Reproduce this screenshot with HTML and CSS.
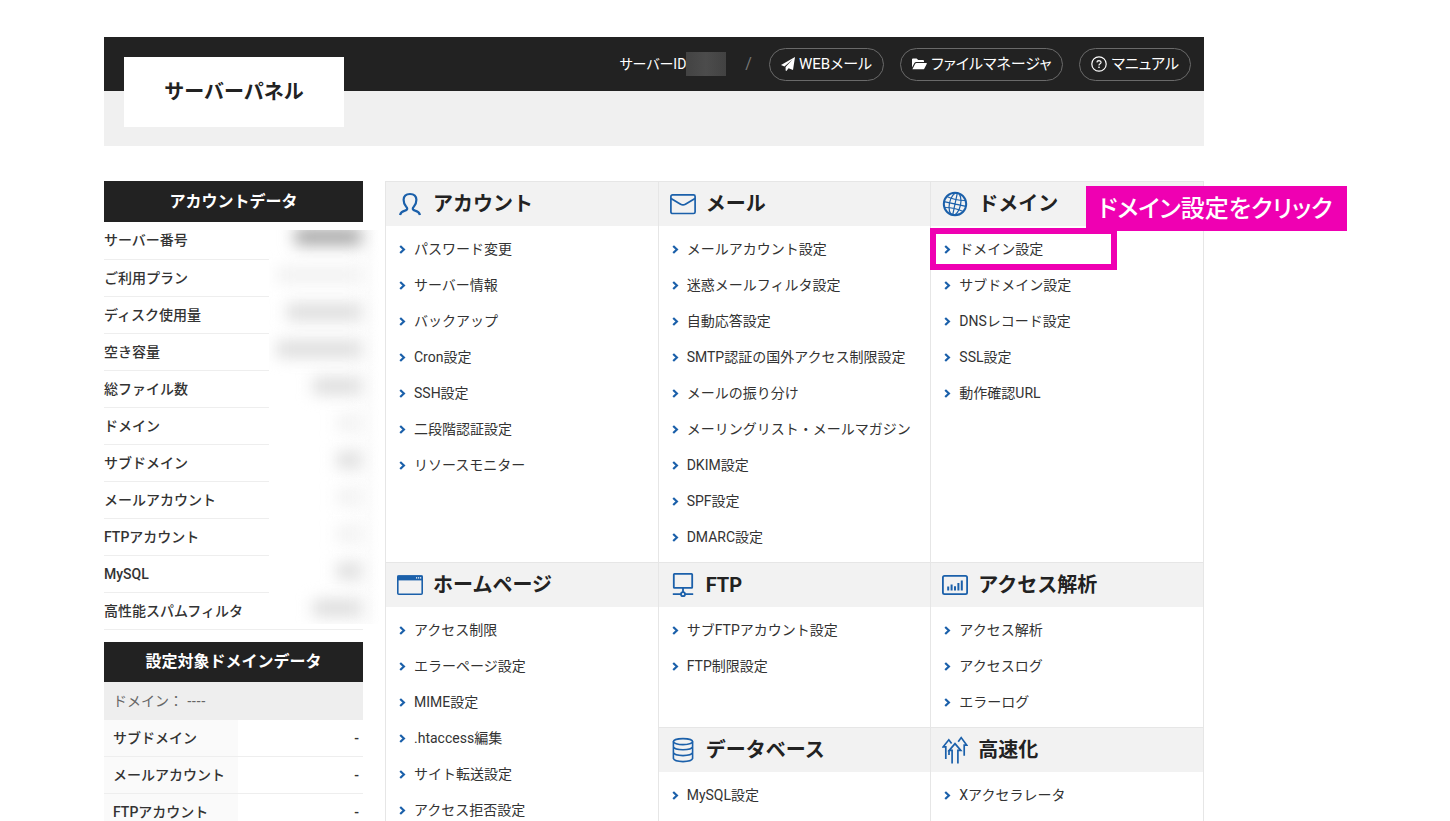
FILE: index.html
```html
<!DOCTYPE html>
<html lang="ja">
<head>
<meta charset="utf-8">
<title>サーバーパネル</title>
<link rel="stylesheet" href="styles.css">
</head>
<body>
<svg class="defs" aria-hidden="true">
  <symbol id="chev" viewBox="0 0 7 9"><path d="M1.2 1 L4.9 4.5 L1.2 8" fill="none" stroke="#1b60aa" stroke-width="2.2"/></symbol>
</svg>
<div class="page">
  <header class="header">
    <div class="topbar">
      <span class="server-id">サーバーID<span class="id-mask"></span></span>
      <span class="slash">/</span>
      <a class="pill" href="#"><svg width="14" height="14" viewBox="0 0 14 14"><path d="M14 0 L12 13 L7.6 11.2 L5.4 14 L4.6 13.6 V10 L11.6 2.6 L3.4 9.4 L0 8Z" fill="#fff"/></svg>WEBメール</a>
      <a class="pill" href="#"><svg width="15" height="12" viewBox="0 0 15 12"><path d="M0 9.6 V1.4 Q0 .4 1 .4 H4.6 L6.2 2 H11 Q12 2 12 3 V4 H4.2 Q3 4 2.4 5Z M.4 11.2 L3.2 5.8 Q3.6 5 4.4 5 H14.4 Q15 5.1 14.8 5.8 L12.4 10.4 Q11.9 11.3 11 11.3Z" fill="#fff"/></svg>ファイルマネージャ</a>
      <a class="pill" href="#"><svg width="16" height="16" viewBox="0 0 16 16"><g fill="none" stroke="#fff" stroke-width="1.2"><circle cx="8" cy="8" r="7.2"/><path d="M5.9 6.4 Q6 4.6 8 4.6 Q10.1 4.7 10.1 6.3 Q10 7.4 8.8 8 Q8 8.4 8 9.4"/></g><rect x="7.3" y="10.6" width="1.4" height="1.4" fill="#fff"/></svg>マニュアル</a>
    </div>
    <h1 class="logo">サーバーパネル</h1>
  </header>

  <div class="columns">
    <aside class="side">
      <section class="account">
        <h2 class="side-title">アカウントデータ</h2>
        <table class="data">
          <tr><th>サーバー番号</th></tr>
          <tr><th>ご利用プラン</th></tr>
          <tr><th>ディスク使用量</th></tr>
          <tr><th>空き容量</th></tr>
          <tr><th>総ファイル数</th></tr>
          <tr><th>ドメイン</th></tr>
          <tr><th>サブドメイン</th></tr>
          <tr><th>メールアカウント</th></tr>
          <tr><th>FTPアカウント</th></tr>
          <tr><th>MySQL</th></tr>
          <tr><th>高性能スパムフィルタ</th></tr>
        </table>
        <div class="veil" aria-hidden="true">
          <i class="w-head"></i><i class="w-xl faint"></i><i class="w-l"></i><i class="w-xl"></i><i class="w-m"></i><i class="w-s faint"></i><i class="w-s"></i><i class="w-s faint"></i><i class="w-s faint"></i><i class="w-s"></i><i class="w-m"></i>
        </div>
      </section>
      <section>
        <h2 class="side-title">設定対象ドメインデータ</h2>
        <p class="domain">ドメイン： ----</p>
        <table class="data target">
          <tr><th>サブドメイン</th><td>-</td></tr>
          <tr><th>メールアカウント</th><td>-</td></tr>
          <tr><th>FTPアカウント</th><td>-</td></tr>
        </table>
      </section>
    </aside>

    <main class="menu">
      <section class="card">
        <h2><svg width="26" height="26" viewBox="0 0 26 26"><path d="M3 24 Q4 20.4 8 19.6 Q10.2 19.2 10.2 17.6 Q10.2 16.8 9.2 15.8 Q6.6 13 6.6 8.8 Q6.8 3 13 3 Q19.2 3 19.4 8.8 Q19.4 13 16.8 15.8 Q15.8 16.8 15.8 17.6 Q15.8 19.2 18 19.6 Q22 20.4 23 24" fill="none" stroke="#1b60aa" stroke-width="2.2"/></svg>アカウント</h2>
        <ul>
          <li><svg><use href="#chev"/></svg><a href="#">パスワード変更</a></li>
          <li><svg><use href="#chev"/></svg><a href="#">サーバー情報</a></li>
          <li><svg><use href="#chev"/></svg><a href="#">バックアップ</a></li>
          <li><svg><use href="#chev"/></svg><a href="#">Cron設定</a></li>
          <li><svg><use href="#chev"/></svg><a href="#">SSH設定</a></li>
          <li><svg><use href="#chev"/></svg><a href="#">二段階認証設定</a></li>
          <li><svg><use href="#chev"/></svg><a href="#">リソースモニター</a></li>
        </ul>
      </section>
      <section class="card">
        <h2><svg width="26" height="26" viewBox="0 0 26 26"><g fill="none" stroke="#1b60aa" stroke-width="1.7"><rect x=".9" y="3.9" width="24.2" height="18.6" rx="1.6"/><path d="M1 7.4 L10.6 13.2 Q13 14.6 15.4 13.2 L25 7.4"/></g></svg>メール</h2>
        <ul>
          <li><svg><use href="#chev"/></svg><a href="#">メールアカウント設定</a></li>
          <li><svg><use href="#chev"/></svg><a href="#">迷惑メールフィルタ設定</a></li>
          <li><svg><use href="#chev"/></svg><a href="#">自動応答設定</a></li>
          <li><svg><use href="#chev"/></svg><a href="#">SMTP認証の国外アクセス制限設定</a></li>
          <li><svg><use href="#chev"/></svg><a href="#">メールの振り分け</a></li>
          <li><svg><use href="#chev"/></svg><a href="#">メーリングリスト・メールマガジン</a></li>
          <li><svg><use href="#chev"/></svg><a href="#">DKIM設定</a></li>
          <li><svg><use href="#chev"/></svg><a href="#">SPF設定</a></li>
          <li><svg><use href="#chev"/></svg><a href="#">DMARC設定</a></li>
        </ul>
      </section>
      <section class="card">
        <h2><svg width="26" height="26" viewBox="0 0 26 26"><g fill="none" stroke="#1b60aa" stroke-width="1.2"><circle cx="13" cy="13" r="11.2" stroke-width="2"/><g transform="rotate(12 13 13)"><ellipse cx="13" cy="13" rx="5.6" ry="11.3"/><path d="M13 1.7 V24.3 M1.7 13 H24.3 M3.4 7.4 Q13 9.6 22.6 7.4 M3.4 18.6 Q13 16.4 22.6 18.6"/></g></g></svg>ドメイン</h2>
        <ul>
          <li class="marked"><svg><use href="#chev"/></svg><a href="#">ドメイン設定</a></li>
          <li><svg><use href="#chev"/></svg><a href="#">サブドメイン設定</a></li>
          <li><svg><use href="#chev"/></svg><a href="#">DNSレコード設定</a></li>
          <li><svg><use href="#chev"/></svg><a href="#">SSL設定</a></li>
          <li><svg><use href="#chev"/></svg><a href="#">動作確認URL</a></li>
        </ul>
        <p class="callout">ドメイン設定をクリック</p>
      </section>
      <section class="card tall">
        <h2><svg width="26" height="26" viewBox="0 0 26 26"><rect x=".8" y="4" width="24.4" height="18.2" rx="1" fill="none" stroke="#1b60aa" stroke-width="1.6"/><path d="M.4 3.4 H25.6 V8.4 H.4Z" fill="#1b60aa"/><path d="M19 5.8 H20.2 M21 5.8 H22.2 M23 5.8 H24.2" stroke="#fff" stroke-width="1.2"/></svg>ホームページ</h2>
        <ul>
          <li><svg><use href="#chev"/></svg><a href="#">アクセス制限</a></li>
          <li><svg><use href="#chev"/></svg><a href="#">エラーページ設定</a></li>
          <li><svg><use href="#chev"/></svg><a href="#">MIME設定</a></li>
          <li><svg><use href="#chev"/></svg><a href="#">.htaccess編集</a></li>
          <li><svg><use href="#chev"/></svg><a href="#">サイト転送設定</a></li>
          <li><svg><use href="#chev"/></svg><a href="#">アクセス拒否設定</a></li>
        </ul>
      </section>
      <section class="card">
        <h2><svg width="26" height="26" viewBox="0 0 26 26"><g fill="none" stroke="#1b60aa" stroke-width="1.8"><rect x="3.8" y="1.9" width="18.4" height="14" rx=".6"/><path d="M13 16 V20 M2.8 22.2 H11 M15 22.2 H23.2"/><circle cx="13" cy="22.2" r="2"/></g></svg>FTP</h2>
        <ul>
          <li><svg><use href="#chev"/></svg><a href="#">サブFTPアカウント設定</a></li>
          <li><svg><use href="#chev"/></svg><a href="#">FTP制限設定</a></li>
        </ul>
      </section>
      <section class="card">
        <h2><svg width="26" height="26" viewBox="0 0 26 26"><rect x=".9" y="3.9" width="24.2" height="18.2" rx="1.6" fill="none" stroke="#1b60aa" stroke-width="1.8"/><path d="M6.2 18.6 V14.6 M9.6 18.6 V12.6 M13 18.6 V14.2 M16.4 18.6 V11 M19.8 18.6 V8.4" stroke="#1b60aa" stroke-width="2"/></svg>アクセス解析</h2>
        <ul>
          <li><svg><use href="#chev"/></svg><a href="#">アクセス解析</a></li>
          <li><svg><use href="#chev"/></svg><a href="#">アクセスログ</a></li>
          <li><svg><use href="#chev"/></svg><a href="#">エラーログ</a></li>
        </ul>
      </section>
      <section class="card">
        <h2><svg width="26" height="26" viewBox="0 0 26 26"><g fill="none" stroke="#1b60aa" stroke-width="1.6"><ellipse cx="13" cy="4.6" rx="9.6" ry="3"/><path d="M3.4 4.6 V21.6 Q4.4 24.6 13 24.6 Q21.6 24.6 22.6 21.6 V4.6 M3.4 9.8 Q4.4 12.8 13 12.8 Q21.6 12.8 22.6 9.8 M3.4 15.6 Q4.4 18.6 13 18.6 Q21.6 18.6 22.6 15.6"/></g></svg>データベース</h2>
        <ul>
          <li><svg><use href="#chev"/></svg><a href="#">MySQL設定</a></li>
        </ul>
      </section>
      <section class="card">
        <h2><svg width="26" height="28" viewBox="0 0 26 28"><g fill="none" stroke="#1b60aa" stroke-width="1.7"><path d="M10.1 27.4 V14.4 H7.2 L13 7.6 L18.8 14.4 H15.9 V27.4"/><path d="M3.8 23 V10.8 H1.2 L6.8 3.8 L9.6 7.6 M16.2 5.8 L19.2 1.6 L24.8 9.2 H22.2 V19.8 M7 19 V14.4"/></g></svg>高速化</h2>
        <ul>
          <li><svg><use href="#chev"/></svg><a href="#">Xアクセラレータ</a></li>
        </ul>
      </section>
    </main>
  </div>
</div>
</body>
</html>
```
FILE: styles.css
```css
* { box-sizing: border-box; }
body {
  margin: 0;
  height: 100vh;
  overflow: hidden;
  background: #fff;
  color: #333;
  font: 14px/20px Roboto, "Noto Sans CJK JP", sans-serif;
}
h1, h2, p, ul { margin: 0; padding: 0; }
a { color: inherit; text-decoration: none; }
.defs { position: absolute; width: 0; height: 0; }
.page { max-width: 1204px; padding: 37px 0 0 104px; }

.header { position: relative; background: #f0f0f0; padding-bottom: 55px; }
.topbar {
  display: flex;
  align-items: center;
  justify-content: flex-end;
  gap: 16px;
  height: 54px;
  padding-right: 13px;
  background: #222;
  color: #fff;
  font-feature-settings: "palt";
}
.server-id { display: flex; align-items: center; }
.id-mask { width: 40px; height: 24px; background: linear-gradient(90deg, #434343, #4c4c4c 50%, #424242); }
.slash { margin: 0 1px 0 3px; color: #777; font-size: 16px; }
.pill {
  display: flex;
  align-items: center;
  gap: 4px;
  height: 33px;
  padding: 0 11px;
  border: 1px solid #6a6a6a;
  border-radius: 17px;
  font-size: 15px;
}
.logo {
  position: absolute;
  left: 20px;
  top: 20px;
  width: 220px;
  background: #fff;
  color: #222;
  font-size: 20px;
  font-weight: 700;
  line-height: 70px;
  text-align: center;
}

.columns { display: grid; grid-template-columns: 259px 1fr; gap: 22px; margin-top: 35px; align-items: start; }
.side-title { background: #222; color: #fff; font-size: 16px; line-height: 40px; text-align: center; }
.account { position: relative; margin-bottom: 12px; padding-top: 1px; background: #222; }
.data { width: 100%; border-collapse: collapse; background: #fff; }
.data th, .data td { height: 37px; padding: 0; border-bottom: 1px solid #eee; text-align: left; font-weight: 500; }
.target th { width: 134px; padding-left: 9px; background: #fafafa; }
.target td { padding-right: 4px; text-align: right; }
.domain { padding: 9px; background: #eee; color: #666; font-family: "Liberation Sans", "Noto Sans CJK JP", sans-serif; text-spacing-trim: space-all; }

/* Frosted strip over the account values */
.veil {
  position: absolute;
  left: 165px;
  top: 49px;
  width: 110px;
  padding-right: 18px;
  display: flex;
  flex-direction: column;
  align-items: flex-end;
  gap: 21px;
  height: 394px;
  overflow: hidden;
  background: linear-gradient(90deg, #fff 70%, #fcfcfc 92%, #fff);
}
.veil i { flex: none; height: 16px; background: #dadada; filter: blur(8px); }
.veil .w-head { width: 66px; background: linear-gradient(#777, #ccc); }
.veil .w-xl { width: 84px; }
.veil .w-l { width: 74px; }
.veil .w-m { width: 48px; }
.veil .w-s { width: 24px; }
.veil .faint { background: #f0f0f0; }

.menu {
  display: grid;
  grid-template-columns: repeat(3, 1fr);
  grid-template-rows: auto auto 1fr;
  border-left: 1px solid #e6e6e6;
}
.card { position: relative; border: solid #e6e6e6; border-width: 1px 1px 0 0; padding-bottom: 7px; }
.tall { grid-row: span 2; }
.card h2 {
  display: flex;
  align-items: center;
  gap: 10px;
  height: 44px;
  padding-left: 11px;
  margin-bottom: 5px;
  background: #f2f2f2;
  color: #222;
  font-size: 20px;
}
.card ul { list-style: none; }
.card li { position: relative; display: flex; align-items: center; gap: 8px; height: 36px; padding-left: 13px; }
.card li svg { width: 7px; height: 9px; }
.card li a { white-space: nowrap; }
.marked::after {
  content: "";
  box-sizing: border-box;
  position: absolute;
  inset: -3px auto -3px -1px;
  width: 187px;
  border: 6px solid #ef00b2;
  pointer-events: none;
}
.callout {
  position: absolute;
  left: 155px;
  top: 4px;
  padding: 1px 14px 0 12px;
  background: #ef00b2;
  color: #fff;
  font-size: 24px;
  font-weight: 500;
  line-height: 44px;
  white-space: nowrap;
  font-feature-settings: "palt";
}
```
